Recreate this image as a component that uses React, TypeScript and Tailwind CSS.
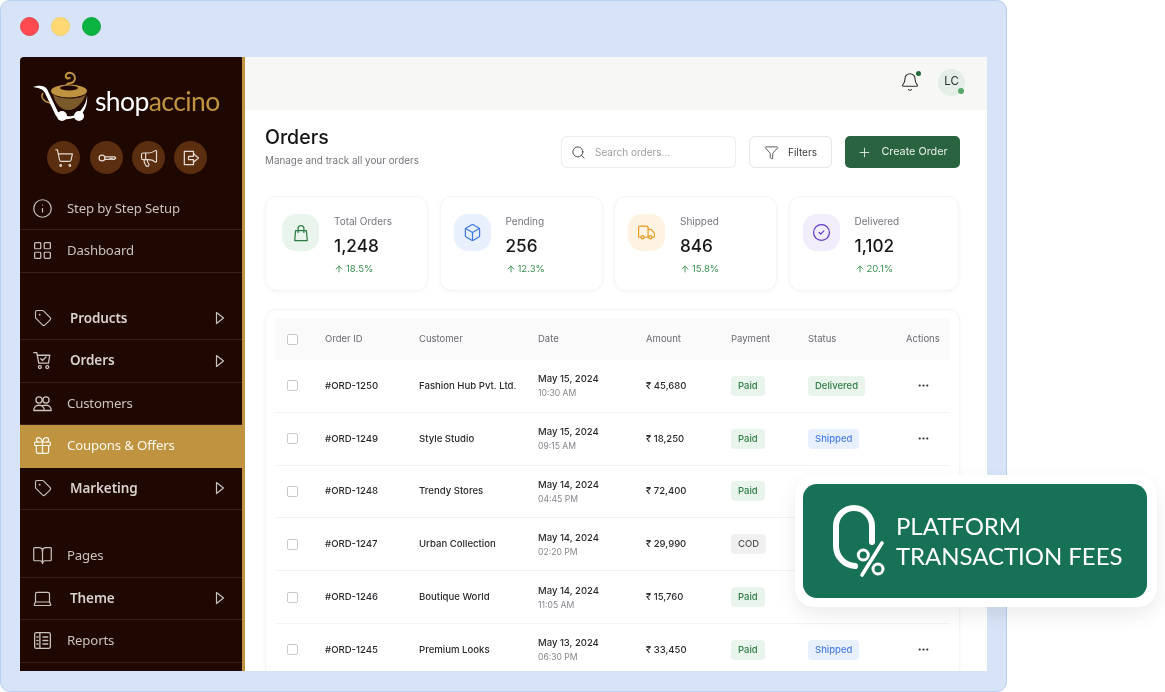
import { ArrowUp, Bell, BookOpen, Box, CircleCheck, Ellipsis, Funnel, Gift, Info, Laptop, LayoutGrid, Megaphone, Plus, Search, ShoppingCart, Tag, Truck } from "lucide-react";
import type { ReactNode } from "react";

function Logo() {
  return (
    <div className="flex h-[84px] items-start pl-[11px] pt-[11px]">
      <svg width="66" height="54" viewBox="0 0 66 54" className="shrink-0">
        <path d="M36 22c-3-4 0-7 4-7 4-1 5-5 3-8-2-3-7-3-8 0-1 3 3 5 4 2" fill="none" stroke="#bf9340" strokeWidth="2" />
        <path d="M22 26c2 10 8 16 15 16 9 0 15-8 18-16-5 6-27 6-33 0z" fill="#7a5a2a" />
        <ellipse cx="38" cy="23" rx="18" ry="6.5" fill="#bf9340" />
        <ellipse cx="38" cy="20" rx="9" ry="2.5" fill="#1f0800" />
        <path d="M2 19C8 17 13 17 16 21L27 44C33 50 45 50 50 42 54 37 56 32 56 27 57 35 54 46 46 49 38 52 30 52 25 48L14 25C12 21 8 20 2 19Z" fill="#fff" />
        <path d="M12 25c-3 4 1 9 7 10" fill="none" stroke="#bf9340" strokeWidth="1.5" />
        <circle cx="31" cy="48" r="5" fill="#fff" />
        <circle cx="48" cy="48" r="5" fill="#fff" />
      </svg>
      <div className="-ml-[2px] mt-[15px] font-['Lato'] text-[26.5px] font-normal leading-[36px] tracking-[-0.6px] text-white">
        shop<span className="text-[#bf9340]">accino</span>
      </div>
    </div>
  );
}

function QuickIcon({ children, className }: { children: ReactNode; className: string }) {
  return <div className={`flex h-[33px] w-[33px] items-center justify-center rounded-full bg-[#5c2e10] text-[#e3dbd4] ${className}`}>{children}</div>;
}

function Ico({ size = 21, children }: { size?: number; children: ReactNode }) {
  return (
    <svg width={size} height={size} viewBox="0 0 24 24" fill="none" stroke="currentColor" strokeWidth="1.5" strokeLinecap="round" strokeLinejoin="round" className="shrink-0">
      {children}
    </svg>
  );
}

function NavRow({ icon, label, bold, active, arrow }: { icon: ReactNode; label: string; bold?: boolean; active?: boolean; arrow?: boolean }) {
  return (
    <div className={`flex h-[42.5px] items-center border-b pl-[12px] pr-[17px] ${active ? "border-[#bf9340] bg-[#bf9340] text-[#fdf8ee]" : "border-[#35201a] text-[#c9c2bd]"}`}>
      <span className="flex w-[21px] justify-center">{icon}</span>
      <span className={`flex-1 leading-none ${bold ? "ml-[17px] text-[13.5px] font-semibold tracking-[-0.1px] text-[#d8d2cd]" : "ml-[14px] text-[13.2px] tracking-[-0.15px]"}`}>{label}</span>
      {arrow && (
        <svg width="10" height="14" viewBox="0 0 10 14" fill="none" stroke="currentColor" strokeWidth="1.2" strokeLinejoin="round">
          <path d="M1.5 1.5 8.5 7l-7 5.5z" />
        </svg>
      )}
    </div>
  );
}

function Sidebar() {
  const ic = { size: 21, strokeWidth: 1.4 };
  const tag = { size: 18, strokeWidth: 1.5 };
  return (
    <aside className="h-full w-[225px] shrink-0 overflow-hidden rounded-tl-[4px] border-r-[3px] border-[#bf9340] bg-[#1f0800] font-['Noto_Sans']">
      <Logo />
      <div className="flex h-[46.5px] items-start pl-[27px]">
        <QuickIcon className="mr-[10px]"><ShoppingCart size={20} strokeWidth={1.4} /></QuickIcon>
        <QuickIcon className="mr-[9px]">
          <Ico size={20}>
            <circle cx="6" cy="12" r="3.5" />
            <path d="M9.5 10.5H21l1.5 1.5-1.5 1.5h-2l-1-1-1 1-1-1-1 1H9.5" />
          </Ico>
        </QuickIcon>
        <QuickIcon className="mr-[9px]"><Megaphone size={20} strokeWidth={1.4} /></QuickIcon>
        <QuickIcon className="">
          <Ico size={20}>
            <path d="M15 8V4H4v16h11v-4" />
            <path d="M9 10h6V7l6 5-6 5v-3H9z" />
          </Ico>
        </QuickIcon>
      </div>
      <NavRow icon={<Info {...ic} />} label="Step by Step Setup" />
      <NavRow icon={<LayoutGrid {...ic} />} label="Dashboard" />
      <div className="h-[25px]" />
      <NavRow icon={<Tag {...tag} />} label="Products" bold arrow />
      <NavRow
        icon={
          <Ico>
            <path d="M2 3h3.5l2.2 12h11.1l1.5-9H6" />
            <circle cx="9" cy="19.5" r="1.7" />
            <circle cx="17.5" cy="19.5" r="1.7" />
            <path d="M10 10l2 2 4-4" />
          </Ico>
        }
        label="Orders"
        bold
        arrow
      />
      <NavRow
        icon={
          <Ico>
            <circle cx="8" cy="8" r="3.5" />
            <circle cx="16" cy="8" r="3.5" />
            <path d="M2 20c0-4 3-6 6-6s6 2 6 6z" />
            <path d="M12 14.5c1-.4 2-.5 4-.5 3 0 6 2 6 6h-8" />
          </Ico>
        }
        label="Customers"
      />
      <NavRow icon={<Gift {...ic} />} label="Coupons & Offers" active />
      <NavRow icon={<Tag {...tag} />} label="Marketing" bold arrow />
      <div className="h-[25px]" />
      <NavRow icon={<BookOpen {...ic} />} label="Pages" />
      <NavRow icon={<Laptop {...ic} />} label="Theme" bold arrow />
      <NavRow
        icon={
          <Ico>
            <rect x="3" y="3" width="18" height="18" rx="2" />
            <path d="M9 3v18M12.5 8H18M12.5 12H18M12.5 16H18M5.5 8H7M5.5 12H7M5.5 16H7" />
          </Ico>
        }
        label="Reports"
      />
    </aside>
  );
}

function StatCard({ tile, icon, label, value, pct, pad }: { tile: string; icon: ReactNode; label: string; value: string; pct: string; pad: string }) {
  return (
    <div className={`flex h-[95px] gap-[15px] rounded-xl border border-[#f5f5f5] bg-white pt-[16px] shadow-[0_1px_4px_rgba(0,0,0,0.04)] ${pad}`}>
      <div className={`mt-[1px] flex h-[37px] w-[37px] items-center justify-center rounded-[14px] ${tile}`}>{icon}</div>
      <div>
        <div className="text-[10px] leading-[16px] text-[#74747c]">{label}</div>
        <div className="mt-[5px] text-[17.2px] font-medium leading-[24px] text-[#17171a]">{value}</div>
        <div className="mt-[4px] flex items-center gap-[2px] text-[9.5px] leading-[14px] text-[#37914d]">
          <ArrowUp size={10} strokeWidth={2.2} />
          {pct}
        </div>
      </div>
    </div>
  );
}

const cols = "grid grid-cols-[38px_94px_119px_108px_85px_77px_98px_45px] items-center px-[12px]";

function Pill({ text, kind }: { text: string; kind: "green" | "blue" | "gray" }) {
  const c = kind === "green" ? "bg-[#e9f4ec] text-[#2f7d46]" : kind === "blue" ? "bg-[#e9f0fd] text-[#4a80e0]" : "bg-[#f0f0f0] text-[#55555c]";
  return <span className={`inline-flex h-[20px] items-center rounded-[4px] px-[7px] text-[9.5px] ${c}`}>{text}</span>;
}

const rows = [
  ["#ORD-1250", "Fashion Hub Pvt. Ltd.", "May 15, 2024", "10:30 AM", "₹ 45,680", "Paid", "Delivered"],
  ["#ORD-1249", "Style Studio", "May 15, 2024", "09:15 AM", "₹ 18,250", "Paid", "Shipped"],
  ["#ORD-1248", "Trendy Stores", "May 14, 2024", "04:45 PM", "₹ 72,400", "Paid", "Delivered"],
  ["#ORD-1247", "Urban Collection", "May 14, 2024", "02:20 PM", "₹ 29,990", "COD", "Shipped"],
  ["#ORD-1246", "Boutique World", "May 14, 2024", "11:05 AM", "₹ 15,760", "Paid", "Delivered"],
  ["#ORD-1245", "Premium Looks", "May 13, 2024", "06:30 PM", "₹ 33,450", "Paid", "Shipped"],
];

function Check() {
  return <span className="block h-[11px] w-[11px] rounded-[2px] border border-[#c9c9c9] bg-white" />;
}

function Orders() {
  return (
    <main className="flex h-full min-w-0 flex-1 flex-col overflow-hidden bg-white font-['Inter']">
      <header className="flex h-[53px] shrink-0 items-center justify-end bg-[#f7f7f5] pb-[3px] pr-[22px]">
        <div className="relative mr-[18px] text-[#2c2c2c]">
          <Bell size={20} strokeWidth={1.3} />
          <span className="absolute -right-[1px] -top-[1px] h-[5px] w-[5px] rounded-full bg-[#1f6b3a]" />
        </div>
        <div className="relative flex h-[27px] w-[27px] items-center justify-center rounded-full bg-[#e4eee6] text-[11.5px] font-normal text-[#2c2c2c]">
          LC
          <span className="absolute bottom-[2px] right-[1px] h-[6px] w-[6px] rounded-full bg-[#5aa86c]" />
        </div>
      </header>
      <div className="pl-[20px] pr-[27px]">
        <div className="flex h-[86px] items-start justify-between pt-[26px]">
          <div className="-mt-[11px]">
            <h1 className="text-[19.5px] font-medium leading-[24px] text-[#151518]">Orders</h1>
            <p className="mt-[3px] text-[9.9px] leading-[16px] text-[#74747c]">Manage and track all your orders</p>
          </div>
          <div className="flex">
            <div className="flex h-[32px] w-[175px] items-center gap-[9px] rounded-[6px] border border-[#eeeeee] bg-white pl-[9px]">
              <Search size={15} strokeWidth={1.4} className="text-[#3a3a3a]" />
              <span className="text-[10px] text-[#9b9ba1]">Search orders...</span>
            </div>
            <div className="ml-[13px] flex h-[32px] w-[83px] items-center justify-center gap-[9px] rounded-[6px] border border-[#e6e6e6] bg-white text-[10px] text-[#3a3a3f]">
              <Funnel size={15} strokeWidth={1.3} />
              Filters
            </div>
            <div className="ml-[13px] flex h-[32px] w-[115px] items-center justify-center gap-[9px] rounded-[5px] bg-[#2a6340] text-[10.8px] text-[#e8f0ea]">
              <Plus size={15} strokeWidth={1.4} />
              Create Order
            </div>
          </div>
        </div>
        <div className="grid grid-cols-[163px_163px_163px_170px] gap-x-[11.5px]">
          <StatCard
            pad="pl-[16px]"
            tile="bg-[#e9f4ec]"
            icon={
              <span className="text-[#2f7d46]">
                <Ico size={20}>
                  <path d="M5.5 9h13l1 12h-15z" />
                  <path d="M8.5 11.5V6.5a3.5 3.5 0 0 1 7 0v5" />
                </Ico>
              </span>
            }
            label="Total Orders"
            value="1,248"
            pct="18.5%"
          />
          <StatCard pad="pl-[13px]" tile="bg-[#e9f0fd]" icon={<Box size={19} strokeWidth={1.5} className="text-[#3f78e0]" />} label="Pending" value="256" pct="12.3%" />
          <StatCard pad="pl-[13px]" tile="bg-[#fef3e2]" icon={<Truck size={19} strokeWidth={1.5} className="text-[#e89a1e]" />} label="Shipped" value="846" pct="15.8%" />
          <StatCard pad="pl-[13px]" tile="bg-[#f1edfb]" icon={<CircleCheck size={19} strokeWidth={1.5} className="text-[#5b34c4]" />} label="Delivered" value="1,102" pct="20.1%" />
        </div>
        <section className="mt-[18px] rounded-xl border border-[#f5f5f5] bg-white px-[9px] pt-[8px] shadow-[0_1px_4px_rgba(0,0,0,0.04)]">
          <div className={`${cols} h-[42px] bg-[#fafafa] text-[9.5px] text-[#6a6a72]`}>
            <Check />
            <span>Order ID</span>
            <span>Customer</span>
            <span>Date</span>
            <span>Amount</span>
            <span>Payment</span>
            <span>Status</span>
            <span>Actions</span>
          </div>
          {rows.map((r) => (
            <div key={r[0]} className={`${cols} h-[52.8px] border-b border-[#f3f3f3] text-[9.6px] font-medium text-[#2a2a2e]`}>
              <Check />
              <span>{r[0]}</span>
              <span className="whitespace-nowrap">{r[1]}</span>
              <div className="pt-[1px]">
                <div className="text-[9.5px] leading-[15px]">{r[2]}</div>
                <div className="text-[8.6px] font-normal leading-[15px] text-[#85858c]">{r[3]}</div>
              </div>
              <span className="text-[9.5px]">{r[4]}</span>
              <span><Pill text={r[5]} kind={r[5] === "COD" ? "gray" : "green"} /></span>
              <span><Pill text={r[6]} kind={r[6] === "Shipped" ? "blue" : "green"} /></span>
              <span className="pl-[11px]"><Ellipsis size={13} strokeWidth={2} /></span>
            </div>
          ))}
        </section>
      </div>
    </main>
  );
}

function FeeBadge() {
  return (
    <div className="absolute left-[795px] top-[475px] rounded-[20px] bg-white py-[9px] pl-[8px] pr-[10px] shadow-[0_8px_20px_rgba(0,0,0,0.08)]">
      <div className="flex h-[114px] w-[344px] items-center rounded-[14px] bg-[#167156] pl-[25px] text-white">
        <svg width="60" height="78" viewBox="0 0 60 78" fill="none" stroke="#fff" strokeLinecap="round" className="shrink-0">
          <path d="M44 40V24A18 18 0 0 0 8 24V44A20 20 0 0 0 27 64" strokeWidth="6" />
          <path d="M34 73 54 41" strokeWidth="3.6" />
          <circle cx="35.3" cy="53" r="5" strokeWidth="3" />
          <circle cx="50" cy="67" r="5" strokeWidth="3" />
        </svg>
        <div className="ml-[8px] whitespace-nowrap font-['Lato'] text-[24px] leading-[30px] tracking-[-0.05px]">
          PLATFORM
          <br />
          TRANSACTION FEES
        </div>
      </div>
    </div>
  );
}

export default function App() {
  return (
    <div className="relative h-[692px] w-[1165px] overflow-hidden bg-white blur-[0.3px]">
      <div className="flex h-[692px] w-[1007px] flex-col rounded-[10px] border border-[#b9d0f2] bg-[#d7e3f6] px-[19px] pb-[20px]">
        <div className="flex h-[56px] shrink-0 items-start gap-[12px] pt-[16px]">
          <span className="h-[19px] w-[19px] rounded-full border border-[#e8464a] bg-[#ff4b4f]" />
          <span className="h-[19px] w-[19px] rounded-full border border-[#f6d067] bg-[#ffd873]" />
          <span className="h-[19px] w-[19px] rounded-full border border-[#0fa63e] bg-[#0bb341]" />
        </div>
        <div className="flex min-h-0 flex-1">
          <Sidebar />
          <Orders />
        </div>
      </div>
      <FeeBadge />
    </div>
  );
}
